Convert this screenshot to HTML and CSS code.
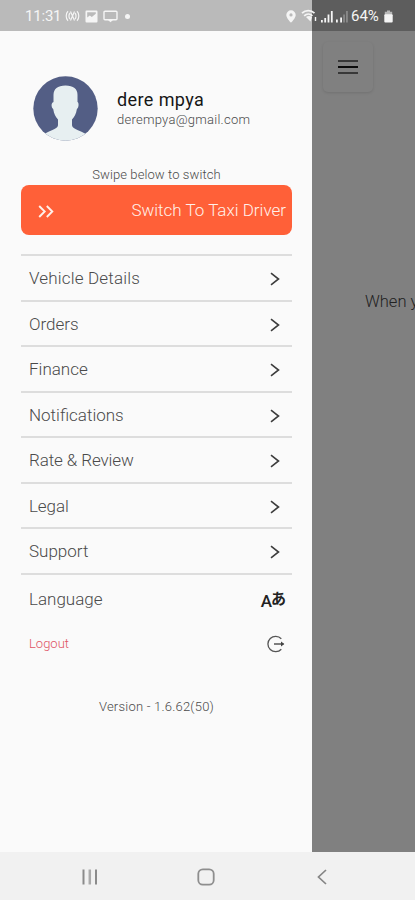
FILE: index.html
```html
<!DOCTYPE html>
<html lang="en">
<head>
<meta charset="utf-8">
<title>Driver menu</title>
<link rel="stylesheet" href="styles.css">
</head>
<body>
<div class="phone">
  <header class="status">
    <div class="status-left">
      <span class="clock">11:31</span>
      <svg width="15" height="12" viewBox="0 0 15 12" fill="none" stroke="currentColor" stroke-width="1.2"><path d="M3 1.200C.6 3.500.6 8.500 3 10.800M5 3C3.600 4.500 3.600 7.500 5 9M12 1.200c2.400 2.300 2.400 7.300 0 9.600M10 3c1.400 1.500 1.400 4.500 0 6M5.500 1.500 9.500 10.500M9.500 1.500 5.500 10.500"/></svg>
      <svg width="13" height="13" viewBox="0 0 13 13"><path fill="currentColor" fill-rule="evenodd" d="M1.500.5h10a1 1 0 0 1 1 1v10a1 1 0 0 1-1 1h-10a1 1 0 0 1-1-1v-10a1 1 0 0 1 1-1ZM2.200 2.200v5.300l2.600-2 2 1.600 4-3.300V2.200Z"/></svg>
      <svg width="15" height="13" viewBox="0 0 15 13" fill="none" stroke="currentColor" stroke-width="1.400"><rect x="1" y="1.200" width="13" height="8.600" rx="1"/><path d="M5 10h5l-2.500 2.200Z" fill="currentColor" stroke="none"/></svg>
      <span class="dot"></span>
    </div>
    <div class="status-right">
      <svg class="pin" width="10" height="13" viewBox="0 0 10 13"><path fill="currentColor" fill-rule="evenodd" d="M5 .3a4.700 4.700 0 0 1 4.700 4.600C9.700 8.200 5 12.600 5 12.600S.3 8.200.3 4.900A4.700 4.700 0 0 1 5 .3Zm0 3a1.600 1.600 0 1 0 0 3.200 1.600 1.600 0 0 0 0-3.200Z"/></svg>
      <svg width="17" height="14" viewBox="0 0 17 14" fill="none" stroke="currentColor" stroke-width="1.800"><path d="M1 4.200c3.500-3.500 9-3.500 12.500 0M3.200 6.800c2.400-2.300 5.800-2.300 8.200 0"/><path d="m5 8 4.500 4.500L11 8C9 6.500 7 6.500 5 8Z" fill="currentColor" stroke="none"/><path stroke-width="1.400" d="M14.500 8v4"/></svg>
      <svg width="12" height="13" viewBox="0 0 12 13" fill="currentColor"><path d="M0 10h1.800v2.500H0zM3.300 8h1.800v4.500H3.300zM6.600 4.500h1.800v8H6.600zM9.900 1h1.800v11.500H9.900z"/></svg>
      <svg width="12" height="13" viewBox="0 0 12 13" fill="currentColor"><path d="M0 9.500h1.800v3H0zM4.200 7.500h1.800v5H4.200z"/><path opacity=".35" d="M7.300 4.500h1.500v8H7.300zM10.200 1h1.500v11.500h-1.500z"/></svg>
      <span class="percent">64%</span>
      <svg width="9" height="13" viewBox="0 0 9 13" fill="currentColor"><path opacity=".6" d="M3 .5h3v1.300h2.200V5H.8V1.800H3z"/><rect x=".3" y="4.300" width="8.400" height="8.200" rx="1"/></svg>
    </div>
  </header>

  <div class="screen">
    <aside class="drawer">
      <div class="profile">
        <svg class="avatar" width="65" height="65" viewBox="0 0 65 65"><defs><clipPath id="disc"><circle cx="32.500" cy="32.500" r="32.200"/></clipPath></defs><g clip-path="url(#disc)"><path fill="#535e85" d="M0 0h65v65H0z"/><path fill="#e7eff1" d="M20.500 19c0-6 4-9.500 12-9.500s12 3.500 12 9.500v7c1.500.5 1.500 5.500-.6 7-.8 5-2.600 8-4.900 10.500v5.500c0 3 4 4.200 9 6.500l6 3v9H10v-9l6-3c5-2.300 9-3.500 9-6.500v-5.500c-2.300-2.500-4-5.500-4.800-10.500-2.200-1.500-2.200-6.500.3-7Z"/></g></svg>
        <div class="identity">
          <div class="name">dere mpya</div>
          <div class="email">derempya@gmail.com</div>
        </div>
      </div>

      <p class="hint">Swipe below to switch</p>
      <div class="slider">
        <svg width="16" height="13" viewBox="0 0 16 13" fill="none" stroke="currentColor" stroke-width="1.900"><path d="m1.200 1 5.500 5.500L1.200 12M8.800 1l5.500 5.500L8.800 12"/></svg>
        <span>Switch To Taxi Driver</span>
      </div>

      <nav class="menu">
        <a class="item wide"><span>Vehicle Details</span><svg class="chev" viewBox="0 0 10 14"><path d="m1 1.200 7.500 5.800L1 12.800"/></svg></a>
        <a class="item"><span>Orders</span><svg class="chev" viewBox="0 0 10 14"><path d="m1 1.200 7.500 5.800L1 12.800"/></svg></a>
        <a class="item"><span>Finance</span><svg class="chev" viewBox="0 0 10 14"><path d="m1 1.200 7.500 5.800L1 12.800"/></svg></a>
        <a class="item"><span>Notifications</span><svg class="chev" viewBox="0 0 10 14"><path d="m1 1.200 7.500 5.800L1 12.800"/></svg></a>
        <a class="item tight"><span>Rate &amp; Review</span><svg class="chev" viewBox="0 0 10 14"><path d="m1 1.200 7.500 5.800L1 12.800"/></svg></a>
        <a class="item tight"><span>Legal</span><svg class="chev" viewBox="0 0 10 14"><path d="m1 1.200 7.500 5.800L1 12.800"/></svg></a>
        <a class="item"><span>Support</span><svg class="chev" viewBox="0 0 10 14"><path d="m1 1.200 7.500 5.800L1 12.800"/></svg></a>
      </nav>

      <div class="language"><span>Language</span><span class="glyphs"><b>A</b><b class="kana">あ</b></span></div>
      <div class="logout"><span>Logout</span><svg width="18" height="18" viewBox="0 0 18 18" fill="none" stroke="#555" stroke-width="1.300"><path d="M14.300 3.800A7.700 7.700 0 1 0 14.300 14.200M7 9h9.500"/><path d="m14 6.500 3.300 2.500-3.300 2.500Z" fill="#444" stroke="none"/></svg></div>
      <p class="version">Version - 1.6.62(50)</p>
    </aside>

    <main class="behind">
      <div class="burger"><i></i><i></i><i></i></div>
      <p class="notice">When you</p>
    </main>
  </div>

  <footer class="navbar">
    <svg width="16" height="16" viewBox="0 0 16 16" fill="none" stroke-width="2"><path stroke="#8b8b8b" d="M1.500.5v15M14 .5v15"/><path stroke="#aaa" stroke-width="2.500" d="M7.800.5v15"/></svg>
    <svg width="18" height="18" viewBox="0 0 18 18" fill="none" stroke="#8e8e8e" stroke-width="1.800"><rect x="1.300" y="1.300" width="15.400" height="15.400" rx="4.500"/></svg>
    <svg width="10" height="16" viewBox="0 0 10 16" fill="none" stroke="#858585" stroke-width="1.700"><path d="M9 1 1.500 8 9 15"/></svg>
  </footer>
</div>
</body>
</html>
```
FILE: styles.css
```css
* { box-sizing: border-box; }
body { margin: 0; font-family: Roboto, "Liberation Sans", sans-serif; }
p { margin: 0; }
svg { display: block; flex: none; }

.phone {
  width: 415px;
  height: 900px;
  overflow: hidden;
  display: grid;
  grid-template-rows: 31px 821px 48px;
}

/* Status bar */
.status {
  display: flex;
  justify-content: space-between;
  align-items: center;
  padding: 1px 22px 0 25px;
  color: #f5f5f5;
  background: linear-gradient(to right, #bababa 312px, #5d5d5d 312px);
}
.status-left, .status-right { display: flex; align-items: center; }
.status-left { gap: 5px; }
.clock { font-size: 15px; width: 35px; letter-spacing: -0.2px; white-space: nowrap; }
.dot { width: 5px; height: 5px; border-radius: 50%; background: #f5f5f5; margin-left: 2px; }
.status-right { gap: 3px; }
.pin { margin-right: 2px; }
.percent { font-size: 15px; width: 30px; }

/* Drawer */
.screen { display: grid; grid-template-columns: 312px 103px; overflow: hidden; }
.drawer { background: #fafafa; padding: 45px 20px 0 21px; color: #4a4a4a; }
.profile { display: flex; align-items: center; gap: 19px; height: 65px; margin-left: 12px; }
.identity { padding-top: 1px; white-space: nowrap; }
.name { font-size: 18px; line-height: 20px; color: #161616; letter-spacing: 0.4px; }
.email { font-size: 13px; line-height: 19px; font-weight: 300; letter-spacing: 0.25px; }
.hint {
  margin-top: 24px;
  height: 20px;
  line-height: 19px;
  text-align: center;
  font-size: 13px;
  font-weight: 300;
  letter-spacing: 0.1px;
}
.slider {
  height: 50px;
  width: 271px;
  border-radius: 8px;
  background: #ff6038;
  color: #fff0ea;
  display: flex;
  align-items: center;
  justify-content: space-between;
  padding: 0 6px 0 17px;
  font-size: 17px;
  font-weight: 300;
}
.slider svg { margin-top: 2px; }

.menu { margin-top: 19px; border-top: 2px solid #ddd; }
.item {
  height: 45.5px;
  display: flex;
  align-items: center;
  justify-content: space-between;
  padding: 1px 12px 0 8px;
  border-bottom: 2px solid #ddd;
  font-size: 17px;
  font-weight: 300;
}
.item.wide { letter-spacing: 0.18px; }
.item.tight { letter-spacing: -0.1px; }
.chev { width: 10px; height: 14px; margin-top: 2px; fill: none; stroke: #3c3c3c; stroke-width: 1.6; }

.language, .logout { display: flex; align-items: center; justify-content: space-between; padding: 0 7px 0 8px; }
.language { height: 49px; font-size: 17px; font-weight: 300; }
.glyphs { display: flex; align-items: center; color: #222; padding-top: 3px; }
.glyphs b { font: 500 17px/20px Roboto, sans-serif; }
.glyphs .kana { font: 700 15px/20px "Noto Sans CJK JP", sans-serif; margin: -5px -1px 0 -1px; }
.logout { height: 41px; font-size: 13px; color: #e05364; font-weight: 300; }
.logout span { margin-top: -2px; }
.version { margin-top: 32px; line-height: 20px; text-align: center; font-size: 13px; font-weight: 300; letter-spacing: 0.22px; }

/* Dimmed page behind the drawer */
.behind { background: #808080; overflow: hidden; }
.burger {
  width: 50px;
  height: 50px;
  margin: 11px 0 0 11px;
  border-radius: 5px;
  box-shadow: 0 1px 3px rgba(0, 0, 0, 0.12);
  display: flex;
  flex-direction: column;
  align-items: center;
  justify-content: center;
  gap: 4px;
}
.burger i { width: 20px; height: 2px; background: #383838; }
.burger i:nth-child(2) { background: #0c0c0c; }
.notice { margin: 200px 0 0 53px; font-size: 16.5px; line-height: 20px; font-weight: 300; color: #222; white-space: nowrap; }

/* System navigation */
.navbar {
  background: #f1f1f1;
  display: grid;
  grid-template-columns: 180px 52px 180px;
  align-items: center;
  justify-items: center;
  padding-top: 2px;
}
```
